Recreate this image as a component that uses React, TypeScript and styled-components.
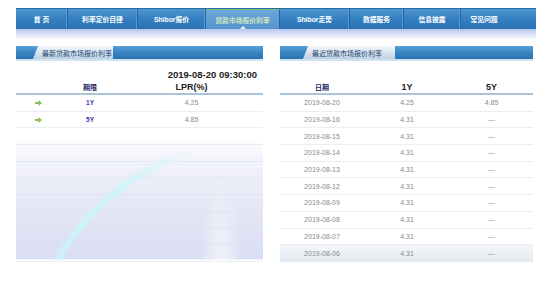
import styled, { createGlobalStyle } from 'styled-components';

const GlobalStyle = createGlobalStyle`
  html, body {
    margin: 0;
    padding: 0;
    background: #fff;
    font-family: "Liberation Sans", "Noto Sans CJK SC", sans-serif;
  }
`;

const Page = styled.div`
  width: 550px;
  height: 287px;
  overflow: hidden;
  padding-top: 8px;
  box-sizing: border-box;
`;

const NavBar = styled.nav`
  display: flex;
  margin-left: 16px;
  width: 520px;
  height: 20px;
  background: linear-gradient(#4c95d0, #3580c2 50%, #2a70b0);
  border-top: 1px solid #2a6aa6;
`;

const NavItem = styled.div<{ w: number; active?: boolean; last?: boolean }>`
  position: relative;
  width: ${p => p.w}px;
  flex: none;
  display: flex;
  align-items: center;
  justify-content: center;
  font-size: 6.8px;
  font-weight: 700;
  color: ${p => (p.active ? '#cfe6bd' : '#fff')};
  background: ${p => (p.active ? 'linear-gradient(#6aa7da, #5694cc)' : 'transparent')};
  border-top: ${p => (p.active ? '1px solid #7cc06a' : 'none')};
  border-right: ${p => (p.last ? 'none' : '1px solid #2463a0')};
  box-shadow: ${p => (p.last ? 'none' : 'inset -1px 0 0 #5a9bd2')};
  white-space: nowrap;
  &::after {
    content: '';
    display: ${p => (p.active ? 'block' : 'none')};
    position: absolute;
    bottom: 0;
    left: 50%;
    margin-left: -3px;
    border-left: 3px solid transparent;
    border-right: 3px solid transparent;
    border-bottom: 3px solid #e8f2fb;
  }
`;

const NavShadow = styled.div`
  margin-left: 16px;
  width: 520px;
  height: 11px;
  background: linear-gradient(#b7c6ee, #dde4f7 50%, #fff);
`;

const Panels = styled.div`
  display: flex;
  margin-top: 6px;
  padding-left: 16px;
  gap: 17px;
`;

const Panel = styled.section<{ w: number }>`
  width: ${p => p.w}px;
  flex: none;
`;

const TitleBar = styled.div`
  display: flex;
  height: 13px;
  background: linear-gradient(#5a9fd6, #3a86c4 45%, #2b73b1);
  border-bottom: 2px solid #cfe3f1;
`;

const TitleTab = styled.div<{ offset: number; w: number }>`
  margin-left: ${p => p.offset}px;
  width: ${p => p.w}px;
  display: flex;
  align-items: center;
  padding-left: 9px;
  box-sizing: border-box;
  font-size: 7px;
  color: #1d3f70;
  background: linear-gradient(#f3f7fb, #d4e1ed 60%, #bccfe0);
  clip-path: polygon(5px 0, 100% 0, 100% 100%, 0 100%);
  white-space: nowrap;
`;

const Body = styled.div<{ art?: boolean }>`
  position: relative;
  background: ${p =>
    p.art
      ? `radial-gradient(ellipse 22px 110px at 205px 225px, rgba(255,255,255,0.75), rgba(255,255,255,0) 100%),
         linear-gradient(#fff 0px, #fff 75px, #f2f3fb 100px, #e6e8f6 140px, #dadef2 198px, #fff 199px)`
      : '#fff'};
  /* the light arc of the backdrop picture, fading out to the right */
  &::before {
    content: '';
    display: ${p => (p.art ? 'block' : 'none')};
    position: absolute;
    left: 0;
    right: 0;
    top: 0;
    height: 199px;
    pointer-events: none;
    background: radial-gradient(circle at 250px 320px, rgba(255,255,255,0) 236px, rgba(200,246,250,0.95) 241px, rgba(255,255,255,0) 247px);
    -webkit-mask-image: linear-gradient(to right, #000 45%, transparent 72%);
    mask-image: linear-gradient(to right, #000 45%, transparent 72%);
  }
`;

const Caption = styled.div`
  height: 20px;
  display: flex;
  align-items: flex-end;
  justify-content: flex-end;
  padding-right: 6px;
  font-size: 9.5px;
  font-weight: 700;
  color: #222;
  line-height: 12px;
`;

const Spacer = styled.div`
  height: 20px;
`;

const Row = styled.div<{ cols: string; head?: boolean; shade?: boolean }>`
  display: grid;
  grid-template-columns: ${p => p.cols};
  align-items: center;
  height: ${p => (p.head ? '14px' : '16.7px')};
  box-sizing: border-box;
  border-bottom: ${p => (p.head ? '2px solid #a9c4da' : '1px solid rgba(214,222,234,0.5)')};
  background: ${p => (p.shade ? 'linear-gradient(#f4f7fa, #e3eaf1)' : 'transparent')};
`;

const Cell = styled.div<{ kind?: 'head' | 'term' | 'value' | 'headCn' }>`
  text-align: center;
  white-space: nowrap;
  font-size: ${p =>
    p.kind === 'head' ? '9px' : p.kind === 'headCn' ? '7px' : p.kind === 'term' ? '6.5px' : '7px'};
  font-weight: ${p => (p.kind && p.kind !== 'value' ? 700 : 400)};
  color: ${p =>
    p.kind === 'term' ? '#3434b0' : p.kind === 'headCn' ? '#222266' : p.kind === 'head' ? '#222' : '#888'};
`;

const Arrow = () => (
  <svg width="7" height="6" viewBox="0 0 7 6" style={{ display: 'block', margin: '0 auto' }}>
    <path d="M0 2h3.5V0L7 3 3.5 6V4H0z" fill="#8cc152" />
  </svg>
);

const navItems = [
  { label: '首 页', w: 51 },
  { label: '利率定价自律', w: 69 },
  { label: 'Shibor报价', w: 67 },
  { label: '贷款市场报价利率', w: 73, active: true },
  { label: 'Shibor走势', w: 69 },
  { label: '数据服务', w: 53 },
  { label: '信息披露', w: 56 },
  { label: '常见问题', w: 46, last: true },
];

const latest = [
  { term: '1Y', lpr: '4.25' },
  { term: '5Y', lpr: '4.85' },
];

const history = [
  ['2019-08-20', '4.25', '4.85'],
  ['2019-08-16', '4.31', '---'],
  ['2019-08-15', '4.31', '---'],
  ['2019-08-14', '4.31', '---'],
  ['2019-08-13', '4.31', '---'],
  ['2019-08-12', '4.31', '---'],
  ['2019-08-09', '4.31', '---'],
  ['2019-08-08', '4.31', '---'],
  ['2019-08-07', '4.31', '---'],
  ['2019-08-06', '4.31', '---'],
];

const leftCols = '44px 60px 1fr';
const rightCols = '84px 86px 1fr';

const App = () => {
  return (
    <Page>
      <GlobalStyle />
      <NavBar>
        {navItems.map(item => (
          <NavItem key={item.label} w={item.w} active={item.active} last={item.last}>
            {item.label}
          </NavItem>
        ))}
      </NavBar>
      <NavShadow />

      <Panels>
        <Panel w={247}>
          <TitleBar>
            <TitleTab offset={17} w={80}>最新贷款市场报价利率</TitleTab>
          </TitleBar>
          <Body art>
            <Caption>2019-08-20 09:30:00</Caption>
            <Row cols={leftCols} head>
              <Cell />
              <Cell kind="headCn">期限</Cell>
              <Cell kind="head">LPR(%)</Cell>
            </Row>
            {latest.map(r => (
              <Row cols={leftCols} key={r.term}>
                <Cell><Arrow /></Cell>
                <Cell kind="term">{r.term}</Cell>
                <Cell>{r.lpr}</Cell>
              </Row>
            ))}
            {Array.from({ length: 8 }).map((_, i) => (
              <Row cols={leftCols} key={i} />
            ))}
          </Body>
        </Panel>

        <Panel w={253}>
          <TitleBar>
            <TitleTab offset={23} w={92}>最近贷款市场报价利率</TitleTab>
          </TitleBar>
          <Body>
            <Spacer />
            <Row cols={rightCols} head>
              <Cell kind="headCn">日期</Cell>
              <Cell kind="head">1Y</Cell>
              <Cell kind="head">5Y</Cell>
            </Row>
            {history.map((r, i) => (
              <Row cols={rightCols} key={r[0]} shade={i === history.length - 1}>
                <Cell>{r[0]}</Cell>
                <Cell>{r[1]}</Cell>
                <Cell>{r[2]}</Cell>
              </Row>
            ))}
          </Body>
        </Panel>
      </Panels>
    </Page>
  );
};

export default App;
